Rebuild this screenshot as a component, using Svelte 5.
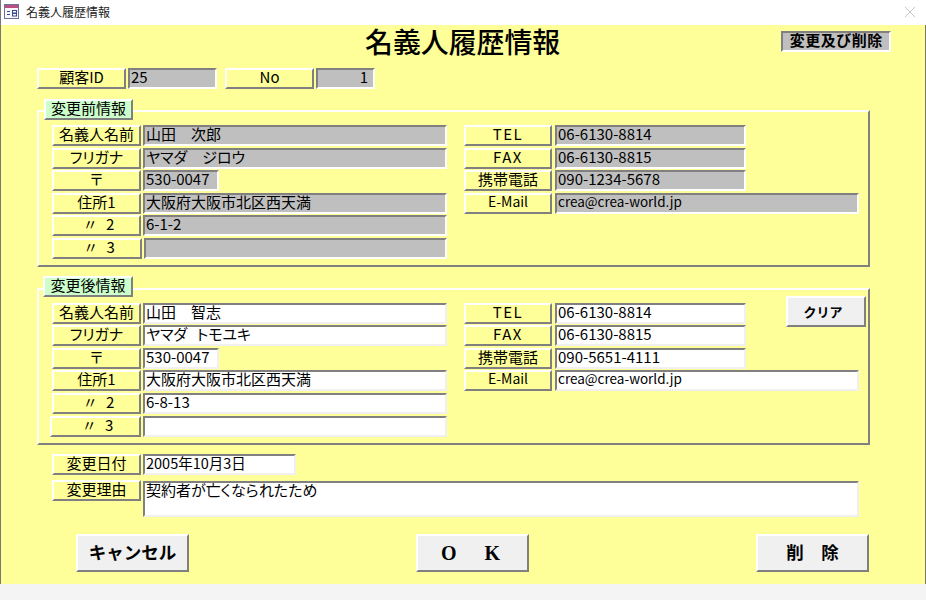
<script>
  const before = {
    left: [
      ['名義人名前', '山田　次郎'],
      ['フリガナ', 'ヤマダ　ジロウ'],
      ['〒', '530-0047', 'short'],
      ['住所1', '大阪府大阪市北区西天満'],
      ['〃 2', '6-1-2'],
      ['〃 3', '', 'shifted']
    ],
    right: [
      ['TEL', '06-6130-8814'],
      ['FAX', '06-6130-8815'],
      ['携帯電話', '090-1234-5678'],
      ['E-Mail', 'crea@crea-world.jp', 'long']
    ]
  };
  const after = {
    left: [
      ['名義人名前', '山田　智志'],
      ['フリガナ', 'ヤマダ トモユキ'],
      ['〒', '530-0047', 'short'],
      ['住所1', '大阪府大阪市北区西天満'],
      ['〃 2', '6-8-13'],
      ['〃 3', '', 'wide']
    ],
    right: [
      ['TEL', '06-6130-8814'],
      ['FAX', '06-6130-8815'],
      ['携帯電話', '090-5651-4111'],
      ['E-Mail', 'crea@crea-world.jp', 'long']
    ]
  };
</script>

{#snippet rows(list, cls)}
  <div class="col {cls}">
    {#each list as [label, value, size]}
      <div
        class="label {size ?? ''}"
        class:ditto={label.startsWith('〃')}
        class:spaced={label === 'TEL' || label === 'FAX'}
      >{label}</div>
      <div class="field {size ?? ''}">{value}</div>
    {/each}
  </div>
{/snippet}

{#snippet group(title, data, filled)}
  <section class="group" class:filled>
    <div class="tag">{title}</div>
    <div class="frame">
      {@render rows(data.left, 'left')}
      {@render rows(data.right, 'right')}
      {#if filled}
        <button class="btn clear">クリア</button>
      {/if}
    </div>
  </section>
{/snippet}

<div class="window">
  <header class="titlebar">
    <svg class="icon" width="15" height="15" viewBox="0 0 15 15">
      <rect x="0.5" y="0.5" width="14" height="14" fill="#f6f6fb" stroke="#6b7299" />
      <rect x="1" y="1" width="13" height="3" fill="#b84f80" />
      <path d="M3 7.5h3M3 10.5h3" stroke="#3a4a88" />
      <rect x="8.5" y="6.5" width="4" height="2.5" fill="none" stroke="#3a4a88" />
      <rect x="8.5" y="9.5" width="4" height="2.5" fill="none" stroke="#3a4a88" />
    </svg>
    <span class="wintitle">名義人履歴情報</span>
    <svg class="close" width="10" height="10" viewBox="0 0 10 10">
      <path d="M0 0L10 10M10 0L0 10" stroke="#c8c8c8" />
    </svg>
  </header>

  <main class="form">
    <div class="head">
      <h1>名義人履歴情報</h1>
      <div class="delete">変更及び削除</div>
    </div>

    <div class="ids">
      <div class="label">顧客ID</div>
      <div class="field id">25</div>
      <div class="label no">No</div>
      <div class="field num">1</div>
    </div>

    {@render group('変更前情報', before, false)}
    {@render group('変更後情報', after, true)}

    <div class="change">
      <div class="label">変更日付</div>
      <div class="field date">2005年10月3日</div>
      <div class="label">変更理由</div>
      <div class="field reason">契約者が亡くなられたため</div>
    </div>

    <div class="actions">
      <button class="btn big">キャンセル</button>
      <button class="btn big ok">O　K</button>
      <button class="btn big">削　除</button>
    </div>
  </main>
  <div class="status"></div>
</div>

<style>
  :global(body) {
    margin: 0;
    background: #f4f4f4;
  }
  .window {
    width: 926px;
    height: 600px;
    display: flex;
    flex-direction: column;
    overflow: hidden;
    font-family: "Noto Sans CJK JP", sans-serif;
    color: #000;
  }
  .titlebar {
    height: 25px;
    flex: none;
    background: #fff;
    display: flex;
    align-items: center;
    padding: 0 11px 2px 3px;
    box-sizing: border-box;
    border-left: 1px solid #777;
  }
  .icon {
    flex: none;
  }
  .wintitle {
    margin-left: 7px;
    font-size: 12px;
    color: #222;
    flex: 1;
  }
  .form {
    height: 559px;
    flex: none;
    box-sizing: border-box;
    background: #ffff99;
    border-left: 1px solid #777;
    border-right: 1px solid #777;
    padding-top: 6px;
    padding-left: 36px;
    font-size: 15px;
    line-height: 1;
  }
  .status {
    flex: 1;
    background: #f4f4f4;
  }
  .head {
    height: 37px;
    display: flex;
    align-items: flex-start;
  }
  h1 {
    margin: -5px 0 0 328px;
    font-size: 27.9px;
    line-height: 30px;
    font-weight: 500;
    white-space: nowrap;
  }
  .delete {
    width: 110px;
    height: 21px;
    box-sizing: border-box;
    margin-left: 221px;
    background: #bfbfbf;
    border: 2px solid;
    border-color: #808080 #fff #fff #808080;
    font-size: 15px;
    letter-spacing: 0.5px;
    font-weight: 700;
    text-align: center;
    line-height: 14px;
    white-space: nowrap;
  }
  .label {
    height: 21px;
    box-sizing: border-box;
    background: #ffff99;
    border: 2px solid;
    border-color: #fff #808080 #808080 #fff;
    text-align: center;
    line-height: 13px;
    white-space: nowrap;
    font-feature-settings: "palt";
  }
  .ditto {
    word-spacing: 5px;
    padding-left: 4px;
  }
  .spaced {
    letter-spacing: 1.5px;
  }
  .field {
    height: 21px;
    box-sizing: border-box;
    background: #fff;
    border: 2px solid;
    border-color: #808080 #f0f0f0 #f0f0f0 #808080;
    padding-left: 1px;
    line-height: 13px;
    white-space: nowrap;
    word-spacing: 6px;
    font-feature-settings: "palt";
  }
  .ids {
    display: flex;
    column-gap: 2px;
    margin-bottom: 10px;
  }
  .ids .label,
  .ids .id {
    width: 89px;
  }
  .ids .no {
    margin-left: 6px;
  }
  .ids .id,
  .ids .num {
    background: #bfbfbf;
    border-color: #808080 #fff #fff #808080;
  }
  .ids .num {
    width: 59px;
    text-align: right;
    padding-right: 5px;
  }
  .group {
    position: relative;
    padding-top: 11px;
    margin-bottom: 9px;
  }
  .group.filled {
    padding-top: 12px;
  }
  .tag {
    position: absolute;
    z-index: 1;
    top: 0;
    left: 7px;
    width: 89px;
    height: 21px;
    box-sizing: border-box;
    background: #ccffcc;
    border: 2px solid;
    border-color: #fff #808080 #808080 #fff;
    text-align: center;
    line-height: 13px;
    white-space: nowrap;
  }
  .group.filled .tag {
    left: 6px;
    width: 90px;
  }
  .frame {
    width: 833px;
    height: 157px;
    box-sizing: border-box;
    border: 2px solid;
    border-color: #fff #808080 #808080 #fff;
    position: relative;
    display: flex;
    align-items: flex-start;
    padding: 13px 0 0 13px;
  }
  .group.filled .frame {
    padding-top: 12.7px;
  }
  .col {
    display: grid;
    grid-auto-rows: 21px;
    row-gap: 1.5px;
    column-gap: 2px;
  }
  .group.filled .col {
    row-gap: 1.6px;
  }
  .col.left {
    grid-template-columns: 89px 304px;
  }
  .col.right {
    margin-left: 17px;
    grid-template-columns: 88px 191px;
    column-gap: 3px;
  }
  .field.short {
    width: 76px;
  }
  .field.long {
    width: 304px;
    font-size: 13.5px;
  }
  .label.long {
    font-size: 14px;
  }
  .label.shifted {
    width: 90px;
  }
  .field.shifted {
    margin-left: 1px;
  }
  .label.wide {
    margin-left: -2px;
    width: 91px;
  }
  .group:not(.filled) .field {
    background: #bfbfbf;
    border-color: #808080 #fff #fff #808080;
  }
  .btn {
    box-sizing: border-box;
    padding: 0;
    background: #f0f0f0;
    border: 2px solid;
    border-color: #fff #808080 #808080 #fff;
    font-family: inherit;
    font-weight: 700;
    color: #000;
  }
  .clear {
    position: absolute;
    left: 747px;
    top: 6px;
    width: 80px;
    height: 31px;
    font-size: 13px;
    padding-right: 6px;
  }
  .change {
    display: grid;
    grid-template-columns: 89px 716px;
    column-gap: 2px;
    row-gap: 5px;
    grid-template-rows: 21px 37px;
    margin-left: 15px;
  }
  .field.date {
    width: 153px;
    font-size: 14.5px;
  }
  .field.reason {
    height: 36px;
    margin-top: 1px;
  }
  .actions {
    display: flex;
    column-gap: 227px;
    margin: 17px 0 0 39px;
  }
  .big {
    width: 113px;
    height: 38px;
    font-size: 17.5px;
    padding-bottom: 4px;
  }
  .ok {
    font-family: "Liberation Serif", "Noto Sans CJK JP", serif;
    font-size: 20px;
    letter-spacing: 4px;
  }
</style>
